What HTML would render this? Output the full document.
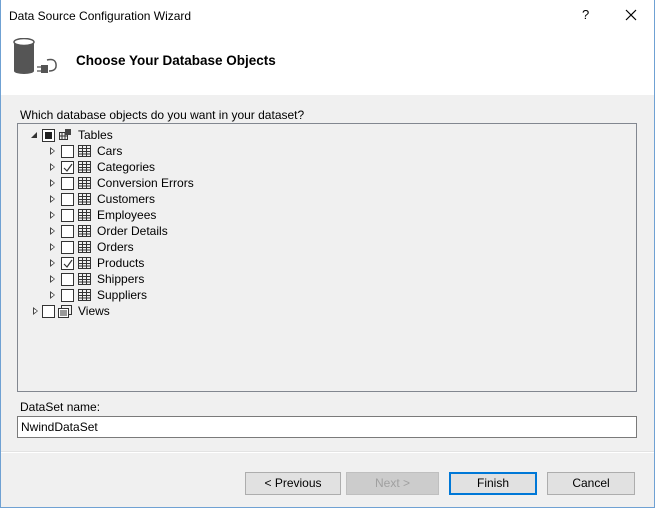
<!DOCTYPE html><html><head><style>
body{margin:0;width:655px;height:508px;overflow:hidden;font-family:"Liberation Sans",sans-serif;font-size:12px;color:#000;background:#f0f0f0;position:relative}
.a{position:absolute}
.row{position:absolute;height:16px;line-height:16px;white-space:nowrap}
.cb{position:absolute;top:2px;width:11px;height:11px;border:1px solid #333;background:#fff;box-sizing:content-box}
.exp{position:absolute;top:4px;width:0;height:0;border-left:5px solid #444;border-top:4px solid transparent;border-bottom:4px solid transparent}
.exp:after{content:"";position:absolute;left:-4px;top:-2px;border-left:3px solid #fff;border-top:2px solid transparent;border-bottom:2px solid transparent}
.btn{position:absolute;top:472px;height:23px;background:#e1e1e1;border:1px solid #adadad;box-sizing:border-box;text-align:center;line-height:21px}
</style></head><body>
<div class="a" style="left:0;top:0;width:655px;height:95px;background:#fff"></div>
<div class="a" style="left:0;top:0;width:1px;height:508px;background:#6fa1d3"></div>
<div class="a" style="right:0;top:0;width:1px;height:508px;background:#6fa1d3"></div>
<div class="a" style="left:0;bottom:0;width:655px;height:1px;background:#6fa1d3"></div>
<div class="a" style="left:9px;top:9px">Data Source Configuration Wizard</div>
<div class="a" style="left:582px;top:7px;font-size:13px">?</div>
<svg class="a" style="left:625px;top:9px" width="12" height="12"><path d="M1 1L11 11M11 1L1 11" stroke="#000" stroke-width="1.2"/></svg>
<svg class="a" style="left:12px;top:38px" width="46" height="40">
<rect x="2" y="4" width="20" height="29" fill="#555"/><ellipse cx="12" cy="33" rx="10" ry="3" fill="#555"/><ellipse cx="12" cy="4" rx="10" ry="3.5" fill="#fff" stroke="#555" stroke-width="1.5"/>
<path d="M37 33 Q45 33 44 26 Q43 20 35 22" fill="none" stroke="#555" stroke-width="1.5"/>
<rect x="29" y="27" width="7" height="8" fill="#555"/><path d="M25 29h4M25 33h4" stroke="#555" stroke-width="1.3"/></svg>
<div class="a" style="left:76px;top:53px;font-weight:bold;font-size:13.5px">Choose Your Database Objects</div>
<div class="a" style="left:20px;top:108px">Which database objects do you want in your dataset?</div>
<div class="a" style="left:17px;top:123px;width:620px;height:269px;border:1px solid #828790;box-sizing:border-box"></div>
<div class="row" style="left:0;top:127px;width:300px">
<div class="a" style="left:31px;top:5px;border-right:6px solid #333;border-top:6px solid transparent"></div>
<div class="cb" style="left:42px"><div class="a" style="left:2px;top:2px;width:7px;height:7px;background:#222"></div></div>
<svg class="a" style="left:59px;top:2px" width="13" height="12"><rect x="0.5" y="3.5" width="8" height="7" fill="none" stroke="#333"/><path d="M0 7h9M3 4v7M6 4v7" stroke="#333"/><rect x="6" y="0" width="6" height="6" fill="#444"/></svg>
<span class="a" style="left:78px">Tables</span></div>
<div id="rows"></div>
<div class="row" style="left:0;top:303px;width:300px">
<div class="exp" style="left:33px"></div><div class="cb" style="left:42px"></div>
<svg class="a" style="left:58px;top:2px" width="14" height="13"><rect x="3.5" y="0.5" width="10" height="9" fill="none" stroke="#333"/><rect x="0.5" y="3.5" width="10" height="9" fill="#fff" stroke="#333"/><path d="M2 6h7M2 8h7M2 10h7" stroke="#333"/></svg>
<span class="a" style="left:78px">Views</span></div>
<div class="a" style="left:20px;top:400px">DataSet name:</div>
<div class="a" style="left:17px;top:416px;width:620px;height:22px;border:1px solid #7a7a7a;background:#fff;box-sizing:border-box;line-height:20px;padding-left:3px">NwindDataSet</div>
<div class="a" style="left:1px;top:452px;width:653px;height:1px;background:#fff"></div>
<div class="a" style="left:1px;top:451px;width:653px;height:1px;background:#e3e3e3"></div>
<div class="btn" style="left:245px;width:96px">&lt; Previous</div>
<div class="btn" style="left:346px;width:93px;background:#cccccc;border-color:#bfbfbf;color:#a0a0a0">Next &gt;</div>
<div class="btn" style="left:449px;width:88px;border:2px solid #0078d7;line-height:19px">Finish</div>
<div class="btn" style="left:547px;width:88px">Cancel</div>
<script>
var n=["Cars","Categories","Conversion Errors","Customers","Employees","Order Details","Orders","Products","Shippers","Suppliers"],c=[0,1,0,0,0,0,0,1,0,0],h="";
n.forEach(function(t,i){h+='<div class="row" style="left:0;top:'+(143+i*16)+'px;width:300px"><div class="exp" style="left:50px"></div><div class="cb" style="left:61px">'+(c[i]?'<svg class="a" style="left:1px;top:1px" width="10" height="10"><path d="M1 5l3 3l5-7" fill="none" stroke="#333" stroke-width="1.2"/></svg>':'')+'</div><svg class="a" style="left:78px;top:2px" width="13" height="12"><rect x="0.5" y="0.5" width="12" height="11" fill="none" stroke="#333"/><path d="M0 3.5h13M0 6.5h13M0 9h13M4.5 0v12M8.5 0v12" stroke="#333"/></svg><span class="a" style="left:97px">'+t+'</span></div>'});
document.getElementById("rows").innerHTML=h;
</script>
</body></html>
